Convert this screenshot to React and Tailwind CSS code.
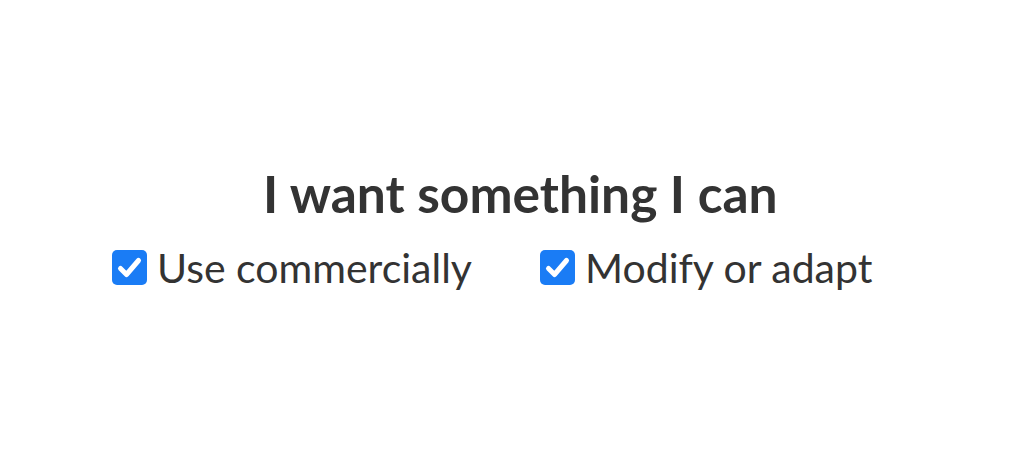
function Box({ label }) {
  return (
    <label className="flex items-center gap-[10px]">
      <span className="flex h-[35px] w-[35px] items-center justify-center rounded-[5px] bg-[#1a7cf5]">
        <svg viewBox="0 0 35 35" className="h-[35px] w-[35px]">
          <path d="M8.5 18.5 L14.5 24.5 L26.5 10.5" fill="none" stroke="white" strokeWidth="5" strokeLinecap="round" strokeLinejoin="round" />
        </svg>
      </span>
      <span className="text-[41px] leading-none text-[#333]">{label}</span>
    </label>
  )
}

export default function App() {
  return (
    <div className="h-[455px] w-[1024px] bg-white font-['Lato','Open_Sans',sans-serif]">
      <div className="pt-[168px]">
        <h1 className="pl-[263px] text-[51.5px] font-bold leading-none text-[#333]">I want something I can</h1>
        <div className="mt-[27px] flex pl-[112px]">
          <div className="w-[428px]">
            <Box label="Use commercially" />
          </div>
          <Box label="Modify or adapt" />
        </div>
      </div>
    </div>
  )
}
